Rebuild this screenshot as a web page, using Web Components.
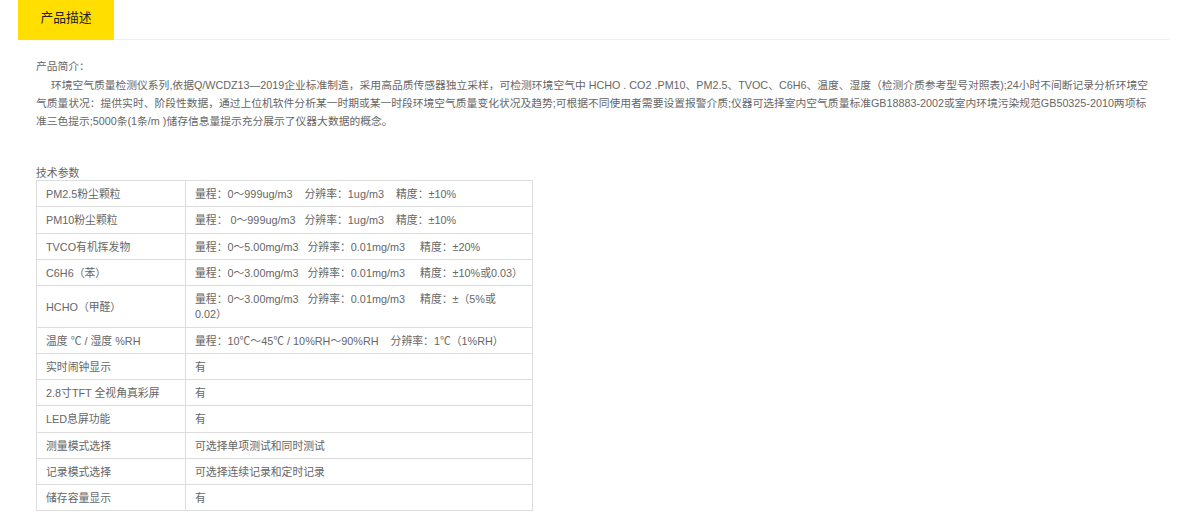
<!DOCTYPE html>
<html lang="zh"><head><meta charset="utf-8"><title>产品描述</title>
<style>html,body{margin:0;background:#fff}body{font-family:"Liberation Sans","Noto Sans CJK SC",sans-serif}</style></head>
<body>
<product-page>
  <tab-bar label="产品描述"></tab-bar>
  <intro-text heading="产品简介：">
&nbsp;&nbsp;&nbsp;&nbsp;&nbsp;环境空气质量检测仪系列,依据Q/WCDZ13—2019企业标准制造，采用高品质传感器独立采样，可检测环境空气中 HCHO . CO2 .PM10、PM2.5、TVOC、C6H6、温度、湿度（检测介质参考型号对照表);24小时不间断记录分析环境空气质量状况：提供实时、阶段性数据，通过上位机软件分析某一时期或某一时段环境空气质量变化状况及趋势;可根据不同使用者需要设置报警介质;仪器可选择室内空气质量标准GB18883-2002或室内环境污染规范GB50325-2010两项标准三色提示;5000条(1条/m )储存信息量提示充分展示了仪器大数据的概念。
  </intro-text>
  <spec-table heading="技术参数"></spec-table>
</product-page>
<script>
const sp='\u00a0';
class ProductPage extends HTMLElement{constructor(){super();this.attachShadow({mode:'open'}).innerHTML=`<style>:host{display:block;width:1151px;margin-left:18px;font:10.84px/18px "Liberation Sans","Noto Sans CJK SC",sans-serif;color:#666}</style><slot></slot>`}}
class TabBar extends HTMLElement{constructor(){super();this.attachShadow({mode:'open'}).innerHTML=`<style>:host{display:flex;border-bottom:1px solid #eee;height:39px}
.t{width:96px;background:#ffde00;color:#222;font-size:12.75px;display:flex;align-items:center;justify-content:center;height:36px;padding-bottom:4px}</style><div class="t"></div>`;
this.shadowRoot.querySelector('.t').textContent=this.getAttribute('label')}}
class IntroText extends HTMLElement{constructor(){super();this.attachShadow({mode:'open'}).innerHTML=`<style>:host{display:block;padding:17px 18px 0 18px;font-size:10.78px}
h4{margin:0;font:inherit;height:19px}p{margin:0}</style><h4></h4><p><slot></slot></p>`;
this.shadowRoot.querySelector('h4').textContent=this.getAttribute('heading')}}
const rows=[
['PM2.5粉尘颗粒',`量程：0～999ug/m3${sp}${sp}${sp}${sp}分辨率：1ug/m3${sp}${sp}${sp}${sp}精度：±10%`],
['PM10粉尘颗粒',`量程：${sp}0～999ug/m3${sp}${sp}${sp}分辨率：1ug/m3${sp}${sp}${sp}${sp}精度：±10%`],
['TVCO有机挥发物',`量程：0～5.00mg/m3${sp}${sp}${sp}分辨率：0.01mg/m3${sp}${sp}${sp}${sp}${sp}精度：±20%`],
['C6H6（苯）',`量程：0～3.00mg/m3${sp}${sp}${sp}分辨率：0.01mg/m3${sp}${sp}${sp}${sp}${sp}精度：±10%或0.03）`],
['HCHO（甲醛）',`量程：0～3.00mg/m3${sp}${sp}${sp}分辨率：0.01mg/m3${sp}${sp}${sp}${sp}${sp}精度：±（5%或 0.02）`],
['温度 ℃ / 湿度 %RH',`量程：10℃～45℃ / 10%RH～90%RH${sp}${sp}${sp}${sp}分辨率：1℃（1%RH）`],
['实时闹钟显示','有'],['2.8寸TFT 全视角真彩屏','有'],['LED息屏功能','有'],
['测量模式选择','可选择单项测试和同时测试'],['记录模式选择','可选择连续记录和定时记录'],['储存容量显示','有']];
class SpecTable extends HTMLElement{constructor(){super();const s=this.attachShadow({mode:'open'});s.innerHTML=`<style>:host{display:block;padding:34px 0 0 18px}
h4{margin:0;font:inherit;height:16px}
table{border-collapse:collapse;width:497px;table-layout:fixed;line-height:15.25px}
td{border:1px solid #ddd;padding:6px 10px 4px 9px}
td:first-child{width:129px}</style><h4></h4><table><tbody></tbody></table>`;
s.querySelector('h4').textContent=this.getAttribute('heading');
const b=s.querySelector('tbody');
for(const [a,c] of rows){const tr=document.createElement('tr');for(const t of [a,c]){const td=document.createElement('td');td.textContent=t;tr.appendChild(td)}b.appendChild(tr)}}}
customElements.define('product-page',ProductPage);
customElements.define('tab-bar',TabBar);
customElements.define('intro-text',IntroText);
customElements.define('spec-table',SpecTable);
</script>
</body></html>
